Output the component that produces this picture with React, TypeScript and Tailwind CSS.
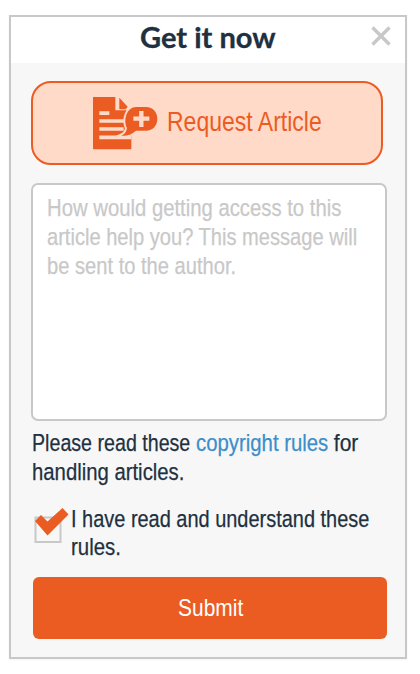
import { useLayoutEffect, useRef, useState } from 'react';
import type { ReactNode } from 'react';

// Condensed text: squeezes a run of type horizontally into the given width.
function Narrow({ width, children, className = '' }: { width: number; children: ReactNode; className?: string }) {
  const ref = useRef<HTMLSpanElement>(null);
  const [scale, setScale] = useState(0.8);
  useLayoutEffect(() => {
    if (ref.current) setScale(width / ref.current.offsetWidth);
  }, [width]);
  return (
    <span className="block shrink-0" style={{ width }}>
      <span
        ref={ref}
        className={`inline-block origin-left whitespace-pre align-top ${className}`}
        style={{ transform: `scaleX(${scale})` }}
      >
        {children}
      </span>
    </span>
  );
}

function ArticleIcon() {
  return (
    <svg className="h-[53px] w-[65px] shrink-0" viewBox="38 36 195 159" aria-hidden="true">
      <path d="M38 36H105V76H141V120L153 150V193H38Z" fill="#eb5c23" />
      <path d="M117 38L142 65L136 73H117Z" fill="#eb5c23" />
      <path d="M57 84.500H87M57 108H132M57 132H130M57 157H153" stroke="#ffdac8" strokeWidth="11" fill="none" />
      <path
        d="M168 66H197C218 66 231 82 231 101C231 121 218 137 197 137H167C156 147 140 154 123 152C132 148 138 142 140 129C128 105 139 66 168 66Z"
        fill="#eb5c23"
        stroke="#ffdac8"
        strokeWidth="12"
        paintOrder="stroke"
      />
      <path d="M183 78V126M159 101H207" stroke="#ffdac8" strokeWidth="13" />
    </svg>
  );
}

export default function App() {
  return (
    <div className="h-[674px] w-[420px] overflow-hidden bg-white pl-[9px] pt-[15px] font-['Liberation_Sans',Arial,sans-serif] text-[24.5px] leading-[29px] text-[#213040]">
      <section className="h-[644px] w-[398px] border-2 border-[#c8c8c8] bg-[#f7f7f7] shadow-[0_1px_2px_#0000000d]">
        <header className="flex h-[46px] items-start bg-white pl-[129px] pr-[14px]">
          <h1 className="-mt-px font-['Lato',sans-serif] text-[28px] font-bold leading-[42px] [-webkit-text-stroke:0.3px_#213040]">
            <Narrow width={136}>Get it now</Narrow>
          </h1>
          <button aria-label="Close" className="ml-auto mt-[9px]">
            <svg className="block h-[20px] w-[20px]" viewBox="0 0 20 20">
              <path d="M1.500 1.500L18.500 18.500M18.500 1.500L1.500 18.500" stroke="#c8c8c8" strokeWidth="3.400" />
            </svg>
          </button>
        </header>

        <div className="pl-5 pt-[18px]">
          <button className="flex h-[84px] w-[352px] items-center rounded-[20px] border-2 border-[#eb5c23] bg-[#ffdac8] pl-[60px] text-left text-[28.5px] leading-[32px] text-[#eb5c23]">
            <ArticleIcon />
            <span className="ml-[9px] mt-[-5px]">
              <Narrow width={155}>Request Article</Narrow>
            </span>
          </button>

          <div className="mt-[18px] h-[238px] w-[356px] rounded-[7px] border-2 border-[#c8c8c8] bg-white pl-[13.500px] pt-2 text-[#c8c8c8] [-webkit-text-stroke:0.25px_#c8c8c8]">
            <Narrow width={294}>How would getting access to this</Narrow>
            <Narrow width={310}>article help you? This message will</Narrow>
            <Narrow width={189}>be sent to the author.</Narrow>
          </div>

          <div className="ml-px mt-[7px] [-webkit-text-stroke:0.25px_currentColor]">
            <div className="flex">
              <Narrow width={163.500}>{'Please read these '}</Narrow>
              <Narrow width={132} className="text-[#3c8ec9]">copyright rules</Narrow>
              <Narrow width={30}>{' for'}</Narrow>
            </div>
            <Narrow width={152.500}>handling articles.</Narrow>
          </div>

          <label className="mt-[18px] flex leading-[28px]">
            <svg className="ml-[3px] mt-[3px] h-[38px] w-[36px] shrink-0" viewBox="0 0 36 38">
              <path d="M1.500 10.500H26.500V35H1.500Z" fill="none" stroke="#c8c8c8" strokeWidth="2" />
              <path d="M1 14L7 8L13.500 14.500L28.500 1L34.500 7.500L13.500 28.500Z" fill="#eb5c23" />
            </svg>
            <div className="-mb-px ml-px mt-px [-webkit-text-stroke:0.25px_#213040]">
              <Narrow width={298}>I have read and understand these</Narrow>
              <Narrow width={50}>rules.</Narrow>
            </div>
          </label>

          <button className="ml-[2px] mt-[17px] flex h-[62px] w-[354px] justify-center rounded-[6px] bg-[#eb5c23] pt-[16px] text-left text-white">
            <Narrow width={65}>Submit</Narrow>
          </button>
        </div>
      </section>
    </div>
  );
}
